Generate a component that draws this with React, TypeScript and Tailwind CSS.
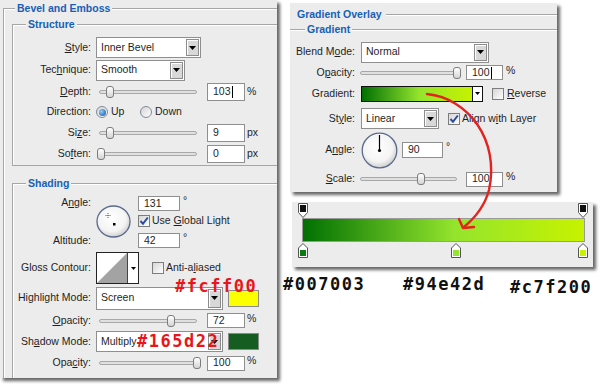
import React from 'react'

type Kids = { children?: React.ReactNode; className?: string }

const U = ({ children }: Kids) => <span className="underline underline-offset-[1px]">{children}</span>

function Title({ children, className }: Kids) {
  return (
    <span className={`absolute -top-[8px] h-[14px] leading-[14px] px-[2px] bg-[#ececec] font-bold text-[#1760b5] ${className}`}>
      {children}
    </span>
  )
}

function Tri() {
  return (
    <svg width="7" height="4" viewBox="0 0 7 4">
      <path d="M0 0h7L3.5 4z" fill="#000" />
    </svg>
  )
}

function Select({ children, className }: Kids) {
  return (
    <div className={`flex items-center bg-white border border-[#8f8f8f] pl-[4px] pr-[1px] shrink-0 ${className}`}>
      <span className="flex-1 whitespace-nowrap overflow-hidden">{children}</span>
      <span className="self-stretch my-[1px] w-[13px] flex items-center justify-center bg-[#d8d8d8] border border-[#8c8c8c] shadow-[inset_1px_1px_0_#fff]">
        <Tri />
      </span>
    </div>
  )
}

function Field({ children, className, caret }: Kids & { caret?: boolean }) {
  return (
    <div className={`flex items-center bg-white border border-[#8f8f8f] pl-[5px] shrink-0 ${className}`}>
      {children}
      {caret && <span className="w-px h-[12px] bg-black ml-px" />}
    </div>
  )
}

function Slider({ pos, className }: { pos: number; className?: string }) {
  return (
    <div className={`relative h-[14px] flex items-center shrink-0 ${className}`}>
      <div className="w-full h-[4px] rounded-full border border-[#a8a8a8] bg-[#e0e0e0]" />
      <div
        className="absolute top-[1px] w-[8px] h-[12px] rounded-[3px] border border-[#7c7c7c] bg-linear-to-b from-white to-[#d4d4d4]"
        style={{ left: pos }}
      />
    </div>
  )
}

function Check({ on }: { on?: boolean }) {
  return (
    <span className="w-[12px] h-[12px] shrink-0 border border-[#7d7d7d] bg-linear-to-br from-[#d6d6d6] to-white flex items-center justify-center">
      {on && (
        <svg width="10" height="10" viewBox="0 0 10 10">
          <path d="M1.5 5 L4 7.8 L8.8 1.5" fill="none" stroke="#2b4aa0" strokeWidth="2" />
        </svg>
      )}
    </span>
  )
}

function Radio({ on }: { on?: boolean }) {
  return (
    <span className="w-[12px] h-[12px] shrink-0 rounded-full border border-[#7f8a96] bg-linear-to-br from-[#d4d4d4] to-white flex items-center justify-center">
      {on && <span className="w-[7px] h-[7px] rounded-full bg-[radial-gradient(circle_at_35%_35%,#8fd0ff,#0b4c98)]" />}
    </span>
  )
}

function Label({ children, className }: Kids) {
  return <div className={`text-right shrink-0 whitespace-nowrap ${className}`}>{children}</div>
}

function LeftPanel() {
  return (
    <div className="relative w-[277px] h-[378px] shrink-0 overflow-hidden bg-[#ececec] shadow-[3px_3px_3px_rgba(0,0,0,0.6)]">
      <div className="relative ml-[3px] mt-[8px] w-[330px] h-[420px] border-t border-l border-[#a6a6a6] shadow-[inset_1px_1px_0_#fff]">
        <Title className="left-[11px]">Bevel and Emboss</Title>

        {/* Structure */}
        <div className="relative ml-[8px] mt-[15px] w-[330px] h-[142px] border border-[#a6a6a6] shadow-[inset_1px_1px_0_#fff] pt-[11px]">
          <Title className="left-[13px]">Structure</Title>
          <div className="flex items-center h-[23px] gap-[5px]">
            <Label className="w-[78px]"><U>S</U>tyle:</Label>
            <Select className="w-[105px] h-[21px]">Inner Bevel</Select>
          </div>
          <div className="flex items-center h-[22px] gap-[5px]">
            <Label className="w-[78px]">Tec<U>h</U>nique:</Label>
            <Select className="w-[89px] h-[21px]">Smooth</Select>
          </div>
          <div className="flex items-center h-[21px] gap-[5px]">
            <Label className="w-[78px]"><U>D</U>epth:</Label>
            <Slider pos={7} className="ml-[3px] w-[98px]" />
            <Field className="ml-[5px] w-[38px] h-[18px]" caret>103</Field>
            <span className="-ml-[3px]">%</span>
          </div>
          <div className="flex items-center h-[20px] gap-[5px]">
            <Label className="w-[78px]">Direction:</Label>
            <div className="flex items-center w-[44px] gap-[3px]">
              <Radio on />
              <span>Up</span>
            </div>
            <div className="-ml-[5px] flex items-center gap-[3px]">
              <Radio />
              <span>Down</span>
            </div>
          </div>
          <div className="flex items-center h-[21px] gap-[5px]">
            <Label className="w-[78px]">Si<U>z</U>e:</Label>
            <Slider pos={7} className="ml-[3px] w-[98px]" />
            <Field className="ml-[5px] w-[38px] h-[18px]">9</Field>
            <span className="-ml-[3px]">px</span>
          </div>
          <div className="flex items-center h-[22px] gap-[5px]">
            <Label className="w-[78px]">So<U>f</U>ten:</Label>
            <Slider pos={-2} className="ml-[3px] w-[98px]" />
            <Field className="ml-[5px] w-[38px] h-[18px]">0</Field>
            <span className="-ml-[3px]">px</span>
          </div>
        </div>

        {/* Shading */}
        <div className="relative ml-[8px] mt-[17px] w-[330px] h-[260px] border-t border-l border-[#a6a6a6] shadow-[inset_1px_1px_0_#fff] pt-[10px]">
          <Title className="left-[13px]">Shading</Title>
          <div className="flex h-[56px]">
            <div className="w-[78px] flex flex-col">
              <Label className="h-[16px] leading-[16px]">A<U>n</U>gle:</Label>
              <Label className="mt-[22px] h-[16px] leading-[16px]">Altitude:</Label>
            </div>
            <svg className="ml-[5px] mt-[11px]" width="35" height="33" viewBox="0 0 35 33">
              <defs>
                <radialGradient id="dial1" cx="45%" cy="40%" r="60%">
                  <stop offset="0%" stopColor="#ffffff" />
                  <stop offset="70%" stopColor="#f4f4f4" />
                  <stop offset="100%" stopColor="#cfcfcf" />
                </radialGradient>
              </defs>
              <ellipse cx="17.5" cy="16.5" rx="16.5" ry="15.5" fill="url(#dial1)" stroke="#5a6a8c" strokeWidth="1.3" />
              <path d="M12 8v5M9.5 10.5h5" stroke="#333" strokeWidth="0.8" strokeDasharray="1 1" />
              <rect x="17" y="18" width="2.5" height="2.5" fill="#000" />
            </svg>
            <div className="ml-[7px] flex flex-col">
              <div className="flex items-start mt-[2px]">
                <Field className="w-[42px] h-[15px]">131</Field>
                <span className="ml-[3px] -mt-[3px]">°</span>
              </div>
              <div className="flex items-center gap-[2px] mt-[4px] h-[12px]">
                <Check on />
                <span className="whitespace-nowrap">Use <U>G</U>lobal Light</span>
              </div>
              <div className="flex items-start mt-[6px]">
                <Field className="w-[42px] h-[15px]">42</Field>
                <span className="ml-[3px] -mt-[3px]">°</span>
              </div>
            </div>
          </div>
          <div className="flex items-center h-[32px] mt-[2px] gap-[5px]">
            <Label className="w-[78px]">Gloss Contour:</Label>
            <div className="flex w-[43px] h-[32px] border border-[#222] bg-white">
              <svg width="30" height="30" viewBox="0 0 30 30">
                <polygon points="0,30 30,0 30,30" fill="#a3a3a3" />
              </svg>
              <div className="flex-1 flex items-center justify-center border-l border-[#444]">
                <svg width="5" height="3" viewBox="0 0 5 3">
                  <path d="M0 0h5L2.5 3z" fill="#000" />
                </svg>
              </div>
            </div>
            <div className="ml-[8px] flex items-center gap-[2px]">
              <Check />
              <span>Anti-a<U>l</U>iased</span>
            </div>
          </div>
          <div className="flex items-center h-[28px] gap-[5px]">
            <Label className="w-[78px]">Hi<U>g</U>hlight Mode:</Label>
            <Select className="w-[127px] h-[23px]">Screen</Select>
            <div className="w-[31px] h-[17px] border border-[#8a8a8a] bg-[#fcff00]" />
          </div>
          <div className="flex items-center h-[17px] gap-[5px]">
            <Label className="w-[78px]"><U>O</U>pacity:</Label>
            <Slider pos={68} className="ml-[3px] w-[98px]" />
            <Field className="ml-[5px] w-[38px] h-[15px]">72</Field>
            <span className="-ml-[3px] -mt-[4px]">%</span>
          </div>
          <div className="flex items-center h-[25px] gap-[5px]">
            <Label className="w-[78px]">Sh<U>a</U>dow Mode:</Label>
            <Select className="w-[127px] h-[21px]">Multiply</Select>
            <div className="w-[31px] h-[17px] border border-[#8a8a8a] bg-[#165d22]" />
          </div>
          <div className="flex items-center h-[18px] gap-[5px]">
            <Label className="w-[78px]">Opa<U>c</U>ity:</Label>
            <Slider pos={94} className="ml-[3px] w-[98px]" />
            <Field className="ml-[5px] w-[38px] h-[15px]">100</Field>
            <span className="-ml-[3px] -mt-[4px]">%</span>
          </div>
        </div>
      </div>
    </div>
  )
}

function RightPanel() {
  return (
    <div className="relative mt-[3px] w-[267px] h-[189px] shrink-0 overflow-hidden bg-[#ececec] shadow-[3px_3px_3px_rgba(0,0,0,0.6)]">
      <div className="relative mt-[11px] border-t border-[#a6a6a6] shadow-[inset_0_1px_0_#fff]">
        <Title className="left-0 pl-[7px] pr-[4px]">Gradient Overlay</Title>
        <div className="relative mt-[14px] border-t border-[#a6a6a6] shadow-[inset_0_1px_0_#fff] pt-[11px]">
          <Title className="left-[15px]">Gradient</Title>
          <div className="flex items-center h-[22px] gap-[6px]">
            <Label className="w-[65px]">Blend M<U>o</U>de:</Label>
            <Select className="w-[128px] h-[21px]">Normal</Select>
          </div>
          <div className="flex items-center h-[19px] gap-[6px]">
            <Label className="w-[65px]">O<U>p</U>acity:</Label>
            <Slider pos={93} className="ml-[-1px] w-[97px]" />
            <Field className="ml-[3px] w-[37px] h-[15px]" caret>100</Field>
            <span className="-ml-[3px] -mt-[4px]">%</span>
          </div>
          <div className="flex items-center h-[23px] gap-[6px]">
            <Label className="w-[65px]">Gradient:</Label>
            <div className="flex w-[122px] h-[16px] border border-[#111] bg-white">
              <div className="w-[110px] h-full bg-[linear-gradient(to_right,#007003,#94e42d_52%,#c7f200)]" />
              <div className="flex-1 flex items-center justify-center border-l border-[#111]">
                <svg width="5" height="3" viewBox="0 0 5 3">
                  <path d="M0 0h5L2.5 3z" fill="#000" />
                </svg>
              </div>
            </div>
            <div className="ml-[3px] flex items-center gap-[3px]">
              <Check />
              <span><U>R</U>everse</span>
            </div>
          </div>
          <div className="flex items-center h-[27px] gap-[6px]">
            <Label className="w-[65px]">St<U>y</U>le:</Label>
            <Select className="w-[78px] h-[21px]">Linear</Select>
            <div className="ml-[3px] flex items-center gap-[2px]">
              <Check on />
              <span className="whitespace-nowrap">Align w<U>i</U>th Layer</span>
            </div>
          </div>
          <div className="flex items-center h-[36px] gap-[6px]">
            <Label className="w-[65px]">A<U>n</U>gle:</Label>
            <svg width="37" height="37" viewBox="0 0 37 37">
              <defs>
                <radialGradient id="dial2" cx="45%" cy="40%" r="60%">
                  <stop offset="0%" stopColor="#ffffff" />
                  <stop offset="70%" stopColor="#f4f4f4" />
                  <stop offset="100%" stopColor="#cfcfcf" />
                </radialGradient>
              </defs>
              <circle cx="18.5" cy="18.5" r="17.3" fill="url(#dial2)" stroke="#5a6a8c" strokeWidth="1.3" />
              <path d="M18.5 18.5V3" stroke="#000" strokeWidth="1.2" />
              <circle cx="18.5" cy="18.5" r="1.6" fill="#000" />
            </svg>
            <div className="-ml-[2px] flex items-start">
              <Field className="w-[41px] h-[16px]">90</Field>
              <span className="ml-[3px] -mt-[3px]">°</span>
            </div>
          </div>
          <div className="flex items-center h-[22px] gap-[6px]">
            <Label className="w-[65px]"><U>S</U>cale:</Label>
            <Slider pos={57} className="ml-[-1px] w-[97px]" />
            <Field className="ml-[3px] w-[37px] h-[15px]">100</Field>
            <span className="-ml-[3px] -mt-[4px]">%</span>
          </div>
        </div>
      </div>
    </div>
  )
}

function OpacityStop({ left }: { left: number }) {
  return (
    <svg className="absolute top-[1px]" style={{ left }} width="10" height="15" viewBox="0 0 10 15">
      <path d="M0.5 0.5H9.5V9.5L5 14.5L0.5 9.5Z" fill="#fff" stroke="#555" />
      <rect x="2" y="2" width="6" height="7" fill="#111" />
    </svg>
  )
}

function ColorStop({ left, color }: { left: number; color: string }) {
  return (
    <svg className="absolute top-[1px]" style={{ left }} width="10" height="15" viewBox="0 0 10 15">
      <path d="M5 0.5L9.5 5V14.5H0.5V5Z" fill="#fff" stroke="#555" />
      <rect x="2" y="7" width="6" height="6" fill={color} />
    </svg>
  )
}

function GradientStrip() {
  return (
    <div className="ml-[2px] mt-[10px] w-[301px] h-[65px] shrink-0 bg-[#ececec] shadow-[3px_3px_3px_rgba(0,0,0,0.6)] pl-[10px]">
      <div className="relative h-[16px]">
        <OpacityStop left={-4} />
        <OpacityStop left={276} />
      </div>
      <div className="w-[283px] h-[24px] border border-[#9a9a9a] bg-[linear-gradient(to_right,#007003,#94e42d_54%,#c7f200)]" />
      <div className="relative h-[15px]">
        <ColorStop left={-4} color="#0b7a12" />
        <ColorStop left={149} color="#94e42d" />
        <ColorStop left={276} color="#c7f200" />
      </div>
    </div>
  )
}

const MONO = "font-['DejaVu_Sans_Mono',monospace] font-bold text-[17px] leading-none tracking-[1.5px]"

export default function App() {
  return (
    <div className="relative w-[611px] h-[387px] overflow-hidden bg-white font-['Liberation_Sans',Arial,sans-serif] text-[10.5px] text-[#1f1f1f]">
      <div className="flex">
        <LeftPanel />
        <div className="ml-[13px] flex flex-col">
          <RightPanel />
          <GradientStrip />
          <div className={`-ml-[7px] mt-[9px] flex text-[#111] ${MONO}`}>
            <span className="w-[120px]">#007003</span>
            <span className="w-[107px]">#94e42d</span>
            <span className="mt-[3px]">#c7f200</span>
          </div>
        </div>
      </div>

      {/* annotations laid over the dialogs */}
      <span className={`absolute left-[175px] top-[278px] text-[#e8161b] ${MONO}`}>#fcff00</span>
      <span className={`absolute left-[137px] top-[333px] text-[#e8161b] ${MONO}`}>#165d22</span>
      <svg className="absolute inset-0 pointer-events-none" width="611" height="387" viewBox="0 0 611 387">
        <path
          d="M427 94 C468 98, 500 140, 489 190 C485 205, 476 217, 464 227"
          fill="none"
          stroke="#e3231f"
          strokeWidth="2.4"
          strokeLinecap="round"
        />
        <path d="M459 219 L463 228 L474 227" fill="none" stroke="#e3231f" strokeWidth="2.4" strokeLinecap="round" strokeLinejoin="round" />
      </svg>
    </div>
  )
}
